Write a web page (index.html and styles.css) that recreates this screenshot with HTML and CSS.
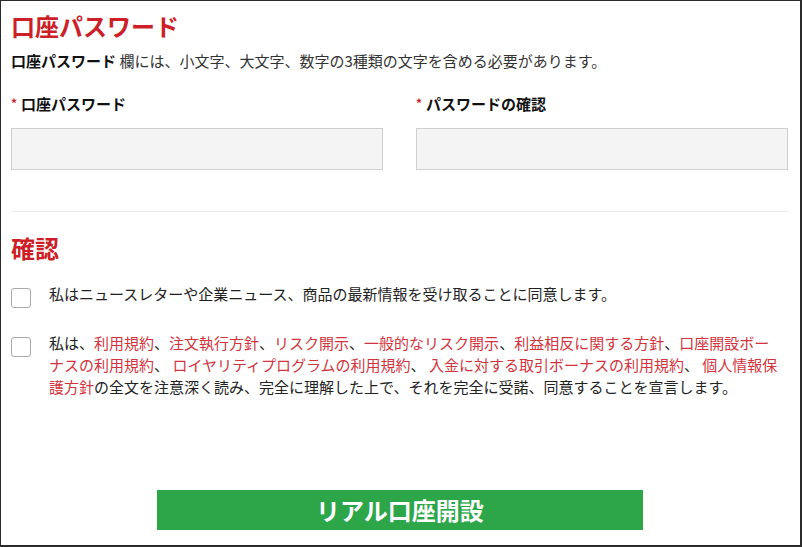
FILE: index.html
```html
<!DOCTYPE html>
<html lang="ja">
<head>
    <meta charset="UTF-8">
    <title>口座パスワード</title>
    <link rel="stylesheet" href="styles.css">
</head>
<body>
    <div class="pagina">
        <h1 class="titulo">口座パスワード</h1>
        <p class="descripcion"><strong>口座パスワード</strong> 欄には、小文字、大文字、数字の3種類の文字を含める必要があります。</p>

        <div class="campos">
            <div class="campo">
                <label class="etiqueta"><span class="requerido">*</span>口座パスワード</label>
                <input type="password" class="entrada">
            </div>
            <div class="campo">
                <label class="etiqueta"><span class="requerido">*</span>パスワードの確認</label>
                <input type="password" class="entrada">
            </div>
        </div>

        <hr class="separador">

        <h2 class="titulo titulo-confirmar">確認</h2>

        <div class="fila fila-primera">
            <input type="checkbox" class="casilla">
            <p class="texto">私はニュースレターや企業ニュース、商品の最新情報を受け取ることに同意します。</p>
        </div>

        <div class="fila fila-segunda">
            <input type="checkbox" class="casilla">
            <p class="texto">私は、<a href="#">利用規約</a>、<a href="#">注文執行方針</a>、<a href="#">リスク開示</a>、<a href="#">一般的なリスク開示</a>、<a href="#">利益相反に関する方針</a>、<a href="#">口座開設ボーナスの利用規約</a>、 <a href="#">ロイヤリティプログラムの利用規約</a>、 <a href="#">入金に対する取引ボーナスの利用規約</a>、 <a href="#">個人情報保護方針</a>の全文を注意深く読み、完全に理解した上で、それを完全に受諾、同意することを宣言します。</p>
        </div>

        <button class="boton">リアル口座開設</button>
    </div>
</body>
</html>
```

FILE: styles.css
```css
body {
    margin: 0;
    font-family: "Noto Sans CJK JP", "Noto Sans", sans-serif;
    color: #222;
    background-color: #fff;
}

.pagina {
    box-sizing: border-box;
    width: 802px;
    height: 547px;
    border-top: 1px solid #2b2b2b;
    border-left: 1px solid #2b2b2b;
    border-right: 2px solid #2b2b2b;
    border-bottom: 2px solid #2b2b2b;
    padding: 0 11px 0 10px;
}

.titulo {
    margin: 10px 0 0;
    font-size: 24px;
    line-height: 30px;
    font-weight: bold;
    color: #cc1f28;
}

.descripcion {
    margin: 9px 0 0;
    font-size: 15px;
    line-height: 22px;
    color: #333;
}

.descripcion strong {
    color: #111;
}

.campos {
    display: grid;
    grid-template-columns: 372px 372px;
    column-gap: 33px;
    margin-top: 21px;
}

.etiqueta {
    display: block;
    font-size: 15px;
    line-height: 22px;
    font-weight: bold;
    color: #111;
}

.requerido {
    color: #cc1f28;
    font-size: 12px;
    margin-right: 4px;
    position: relative;
    top: -2px;
}

.entrada {
    display: block;
    box-sizing: border-box;
    width: 100%;
    height: 42px;
    margin-top: 12px;
    background-color: #f4f4f4;
    border: 1px solid #cfcfcf;
    border-radius: 0;
}

.separador {
    margin: 41px 0 0;
    border: none;
    border-top: 1px solid #ececec;
}

.titulo-confirmar {
    margin-top: 21px;
}

.fila {
    display: flex;
    align-items: flex-start;
    gap: 18px;
}

.fila-primera {
    margin-top: 20px;
}

.fila-segunda {
    margin-top: 24px;
}

.casilla {
    appearance: none;
    flex: none;
    box-sizing: border-box;
    width: 20px;
    height: 20px;
    margin: 5px 0 0;
    border: 1px solid #a9a9a9;
    border-radius: 3px;
    background-color: #fff;
}

.texto {
    margin: 0;
    padding-right: 6px;
    font-size: 15px;
    line-height: 22px;
    color: #222;
}

.texto a {
    color: #d2343d;
    text-decoration: none;
}

.boton {
    display: block;
    width: 486px;
    height: 40px;
    margin: 92px auto 0;
    padding: 0;
    border: none;
    background-color: #2da64a;
    color: #fff;
    font-family: inherit;
    font-size: 24px;
    font-weight: bold;
    line-height: 40px;
}
```
